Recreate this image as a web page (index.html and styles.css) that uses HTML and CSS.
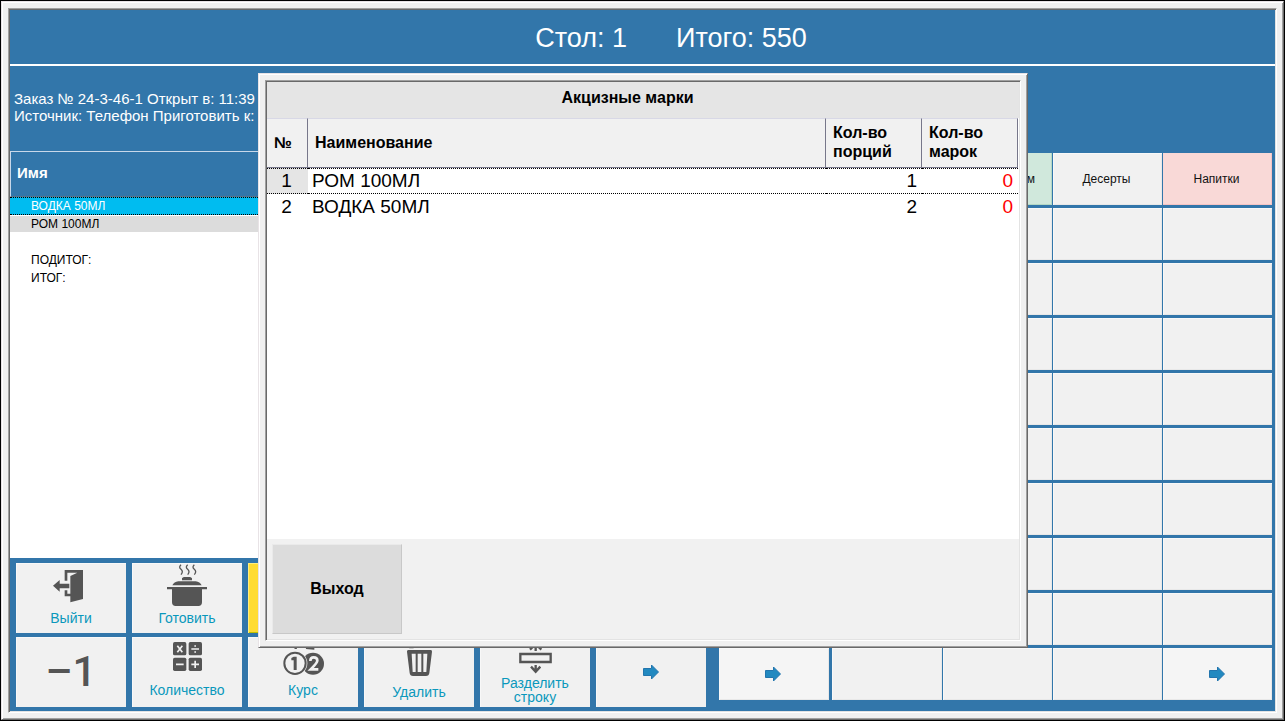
FILE: index.html
```html
<!DOCTYPE html>
<html lang="ru">
<head>
<meta charset="utf-8">
<title>Стол: 1</title>
<link rel="stylesheet" href="styles.css">
</head>
<body>
<div class="frame window">
  <div class="sunken terminal">
    <header class="topbar"><span>Стол: 1</span><span>Итого: 550</span></header>
    <main class="workspace">
      <section class="order">
        <div class="order-info">Заказ № 24-3-46-1 Открыт в: 11:39<br>Источник: Телефон Приготовить к:</div>
        <div class="order-list">
          <table class="order-table">
            <thead><tr><th scope="col">Имя</th></tr></thead>
            <tbody>
              <tr class="selected"><td>ВОДКА 50МЛ</td></tr>
              <tr class="shaded"><td>РОМ 100МЛ</td></tr>
              <tr><td></td></tr>
              <tr><td>ПОДИТОГ:</td></tr>
              <tr><td>ИТОГ:</td></tr>
            </tbody>
          </table>
        </div>
        <div class="actions">
          <button type="button" class="action">
            <svg class="icon" viewBox="48 39 330 138" aria-hidden="true"><path d="M194 60h55v87l-38 10V78l21-10h-30v24h-8zM194 121h8v10h9v8h-17zM159 107l20-17v11h29v14h-29v10z"/></svg>
            <span>Выйти</span>
          </button>
          <button type="button" class="action">
            <svg class="icon" viewBox="396 39 330 138" aria-hidden="true"><path d="M501 111h120v7h-15v39q0 11-11 11h-68q-11 0-11-11v-39h-15zM517 106q5-10 18-12h52q13 2 18 12zM546 85q3-4 8-4h14q5 0 8 4v6h-30z"/><path class="line" d="M543 44q-8 7 0 14t0 16M563 44q-8 7 0 14t0 16M583 44q-8 7 0 14t0 16"/></svg>
            <span>Готовить</span>
          </button>
          <button type="button" class="action yellow"></button>
          <button type="button" class="action"></button>
          <button type="button" class="action"></button>
          <button type="button" class="action"></button>
          <button type="button" class="action minus">–1</button>
          <button type="button" class="action">
            <svg class="icon short" viewBox="396 261 330 132" aria-hidden="true"><rect x="519" y="276" width="40" height="40" rx="5"/><rect x="566" y="276" width="40" height="40" rx="5"/><rect x="519" y="323" width="40" height="40" rx="5"/><rect x="566" y="323" width="40" height="40" rx="5"/><path class="cut" d="M532 287l15 20M547 287l-15 20M574 297h23M583 288h5M583 306h5M528 343h23M574 343h23M585.500 332v22"/></svg>
            <span>Количество</span>
          </button>
          <button type="button" class="action">
            <svg class="icon short" viewBox="24 321 330 132" aria-hidden="true"><circle cx="219" cy="401" r="33"/><circle class="gap" cx="165" cy="400" r="37"/><circle class="disc" cx="165" cy="400" r="32"/><path d="M161 380h9v40h-9v-29h-7v-7zM160 345l4 12h7l-3-14zM196 343l2 14 25 2v-14z"/><path class="cut wide" d="M211 393q0-11 10-11 11 0 11 10 0 6-20 26h23"/></svg>
            <span>Курс</span>
          </button>
          <button type="button" class="action">
            <svg class="icon" viewBox="372 321 330 138" aria-hidden="true"><path fill-rule="evenodd" d="M505 360h67q5 0 4 5l-8 64q-1 9-10 9h-39q-9 0-10-9l-8-64q-1-5 4-5zM515 371l3 55h9v-55zM533 371v55h11v-55zM550 371v55h9l3-55zM507 355h14l-2-8z"/></svg>
            <span>Удалить</span>
          </button>
          <button type="button" class="action">
            <svg class="icon low" viewBox="30 51 330 117" aria-hidden="true"><path class="thick" d="M151 102h91v24h-91zM197 135v21M183 140l14 15 14-15M197 75v18M180 89l11-11M214 89l-11-11"/></svg>
            <span class="tight">Разделить<br>строку</span>
          </button>
          <button type="button" class="action" aria-label="Далее"><svg class="arrow" viewBox="0 0 16 16" aria-hidden="true"><path d="M.5 4.500h8V1l7 7-7 7v-3.500h-8z"/></svg></button>
        </div>
      </section>
      <section class="menu">
        <button type="button" class="cell nav"></button><button type="button" class="cell"></button><button type="button" class="cell green">м</button><button type="button" class="cell">Десерты</button><button type="button" class="cell pink">Напитки</button>
        <button type="button" class="cell nav"></button><button type="button" class="cell"></button><button type="button" class="cell"></button><button type="button" class="cell"></button><button type="button" class="cell"></button>
        <button type="button" class="cell nav"></button><button type="button" class="cell"></button><button type="button" class="cell"></button><button type="button" class="cell"></button><button type="button" class="cell"></button>
        <button type="button" class="cell nav"></button><button type="button" class="cell"></button><button type="button" class="cell"></button><button type="button" class="cell"></button><button type="button" class="cell"></button>
        <button type="button" class="cell nav"></button><button type="button" class="cell"></button><button type="button" class="cell"></button><button type="button" class="cell"></button><button type="button" class="cell"></button>
        <button type="button" class="cell nav"></button><button type="button" class="cell"></button><button type="button" class="cell"></button><button type="button" class="cell"></button><button type="button" class="cell"></button>
        <button type="button" class="cell nav"></button><button type="button" class="cell"></button><button type="button" class="cell"></button><button type="button" class="cell"></button><button type="button" class="cell"></button>
        <button type="button" class="cell nav"></button><button type="button" class="cell"></button><button type="button" class="cell"></button><button type="button" class="cell"></button><button type="button" class="cell"></button>
        <button type="button" class="cell nav"></button><button type="button" class="cell"></button><button type="button" class="cell"></button><button type="button" class="cell"></button><button type="button" class="cell"></button>
        <button type="button" class="cell nav pale" aria-label="Далее"><svg class="arrow" viewBox="0 0 16 16" aria-hidden="true"><path d="M.5 4.500h8V1l7 7-7 7v-3.500h-8z"/></svg></button><button type="button" class="cell"></button><button type="button" class="cell"></button><button type="button" class="cell"></button><button type="button" class="cell pale" aria-label="Далее"><svg class="arrow" viewBox="0 0 16 16" aria-hidden="true"><path d="M.5 4.500h8V1l7 7-7 7v-3.500h-8z"/></svg></button>
      </section>
    </main>
  </div>
</div>

<div class="frame modal" role="dialog" aria-labelledby="modal-title">
  <div class="sunken modal-body">
    <h1 class="modal-title" id="modal-title">Акцизные марки</h1>
    <div class="modal-list">
      <table class="marks">
        <colgroup><col class="c-num"><col><col class="c-qty"><col class="c-qty"></colgroup>
        <thead><tr><th scope="col">№</th><th scope="col">Наименование</th><th scope="col">Кол-во<br>порций</th><th scope="col">Кол-во<br>марок</th></tr></thead>
        <tbody>
          <tr class="current"><td class="num">1</td><td>РОМ 100МЛ</td><td class="qty">1</td><td class="qty red">0</td></tr>
          <tr><td class="num">2</td><td>ВОДКА 50МЛ</td><td class="qty">2</td><td class="qty red">0</td></tr>
        </tbody>
      </table>
    </div>
    <footer class="modal-footer"><button type="button" class="exit">Выход</button></footer>
  </div>
</div>
</body>
</html>
```
FILE: styles.css
```css
* { box-sizing: border-box; }

body {
  margin: 0;
  padding: 1px;
  height: 100vh;
  background: #000;
  color: #000;
  font-family: "Liberation Sans", Arial, sans-serif;
}

button {
  margin: 0;
  padding: 0;
  border: 0;
  font-family: inherit;
}

table {
  width: 100%;
  border-collapse: separate;
  border-spacing: 0;
}

/* Raised outer frame and sunken inner frame */
.frame {
  padding: 6px;
  border: 1px solid;
  border-color: #e8e3e6 #696969 #696969 #e8e3e6;
  background: #f0f0f0;
  box-shadow: inset 1px 1px #fff, inset -1px -1px #a0a0a0;
}

.sunken {
  height: 100%;
  padding: 1px;
  border: 1px solid;
  border-color: #a0a0a0 #fff #fff #a0a0a0;
  box-shadow: inset 1px 1px #696969, inset -1px -1px #e3e3e3;
}

.window { height: 100%; }

.terminal {
  display: flex;
  flex-direction: column;
  background: #3276aa;
}

.topbar {
  display: flex;
  align-items: center;
  justify-content: center;
  gap: 49px;
  height: 56px;
  padding: 2px 0 0 57px;
  border-bottom: 2px solid #fff;
  color: #fff;
  font-size: 27px;
}

.workspace {
  flex: 1;
  min-height: 0;
  display: grid;
  grid-template-columns: 702fr 563fr;
}

/* Order panel */
.order {
  display: flex;
  flex-direction: column;
  min-height: 0;
}

.order-info {
  height: 85px;
  padding: 24px 4px 0;
  color: #fff;
  font-size: 15px;
  line-height: 17px;
}

.order-list {
  flex: 1;
  min-height: 0;
  background: #fff;
}

.order-table th {
  height: 46px;
  padding: 0 6px 4px;
  border: 1px solid;
  border-color: #c8d8ea #c8d8ea #5c7088;
  background: #3276aa;
  color: #fff;
  font-size: 15px;
  text-align: left;
}

.order-table td {
  height: 18px;
  padding: 0 21px;
  font-size: 12px;
  line-height: 16px;
}

.order-table .selected td {
  border: dotted #000;
  border-width: 1px 0;
  background: #00bcf0;
  color: #fff;
}

.order-table .shaded td {
  border: solid #fff;
  border-width: 1px 0;
  background: #dcdcdc;
}

.actions {
  display: grid;
  grid-template-columns: repeat(6, 1fr);
  grid-auto-rows: 70px;
  gap: 4px 6px;
  padding: 5px 6px 4px;
}

.action {
  display: flex;
  flex-direction: column;
  align-items: center;
  justify-content: flex-start;
  background: #f1f1f1;
  box-shadow: inset 1px 1px #f8f8f8;
  color: #0a98bc;
  font-size: 14px;
  line-height: 18px;
}

.action:last-child { justify-content: center; }

.yellow {
  background: #ffdc33;
  box-shadow: inset 1px 1px #ffee80, inset 0 -1px #c0c000;
}

.minus {
  justify-content: center;
  color: #555;
  font-family: Roboto, sans-serif;
  font-size: 42px;
  font-weight: 500;
}

.tight { line-height: 14px; }

.icon {
  flex: none;
  width: 110px;
  height: 46px;
  fill: #555;
}

.short { height: 44px; }
.low { height: 39px; }

.icon .line { fill: none; stroke: #555; stroke-width: 4; }
.icon .thick { fill: none; stroke: #555; stroke-width: 7; }
.icon .cut { fill: none; stroke: #f1f1f1; stroke-width: 5; }
.icon .wide { stroke-width: 8; }
.icon .gap { fill: #f1f1f1; }
.icon .disc { fill: #f1f1f1; stroke: #555; stroke-width: 6; }

.arrow {
  display: block;
  width: 16px;
  height: 16px;
  fill: #2289c0;
  stroke: #2275ad;
}

/* Menu grid */
.menu {
  display: grid;
  grid-template-columns: 112fr 110fr 109fr 109fr 109fr;
  grid-template-rows: repeat(10, 1fr);
  gap: 3px 1px;
  padding: 87px 3px 11px 7px;
}

.cell {
  display: flex;
  align-items: center;
  justify-content: center;
  padding-right: 2px;
  background: #f1f1f1;
  box-shadow: inset 1px 1px #f8f8f8, inset -1px -1px #e8e8e8;
  color: #111;
  font-size: 12px;
}

.nav { margin-right: 2px; }
.pale { background: #f5f5f5; }

.green {
  justify-content: flex-end;
  padding-right: 17px;
  background: #d0e8dc;
  box-shadow: inset -1px -1px #b4d8c4;
}

.pink {
  background: #f9d9d7;
  box-shadow: inset -1px -1px #f4c4c4;
}

/* Excise marks dialog */
.modal {
  position: fixed;
  inset: 73px 257px 73px 258px;
}

.modal-body {
  display: flex;
  flex-direction: column;
  background: #f1f1f1;
}

.modal-title {
  height: 36px;
  margin: 0;
  padding-right: 31px;
  background: #e5e5e5;
  font-size: 16px;
  line-height: 31px;
  text-align: center;
}

.modal-list {
  flex: 1;
  min-height: 0;
  background: #fff;
}

.marks {
  table-layout: fixed;
  padding-right: 1px;
}

.c-num { width: 41px; }
.c-qty { width: 96px; }

.marks th {
  height: 50px;
  padding: 0 7px 2px;
  border: solid;
  border-width: 1px 1px 1px 0;
  border-color: #d8d8e6 #77778a #77778a;
  background: #f1f1f1;
  font-size: 16px;
  line-height: 19px;
  text-align: left;
}

.marks td {
  height: 26px;
  padding: 0 5px 0 4px;
  font-size: 19px;
  line-height: 24px;
}

.marks .current td {
  border: dotted #000;
  border-width: 1px 0;
}

.marks .num { padding: 0 2px 0 0; text-align: center; }
.marks .current .num { background: #e5e5e5; }
.marks .qty { text-align: right; }
.marks .red { color: #f00; }

.modal-footer {
  height: 100px;
  padding: 5px;
}

.exit {
  width: 130px;
  height: 90px;
  border: 1px solid;
  border-color: #eaeaea #c8c8c8 #c8c8c8 #eaeaea;
  background: #dcdcdc;
  color: #000;
  font-size: 16px;
  font-weight: bold;
}
```
